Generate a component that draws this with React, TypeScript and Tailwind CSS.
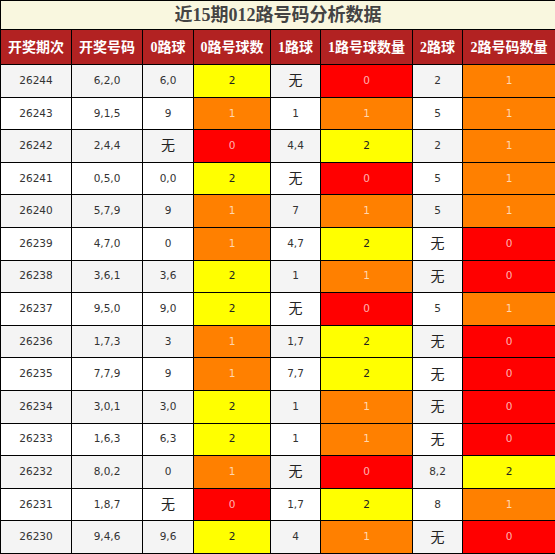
import React from "react";

type Row = [string, string, string, number, string, number, string, number];

const rows: Row[] = [
  ["26244", "6,2,0", "6,0", 2, "无", 0, "2", 1],
  ["26243", "9,1,5", "9", 1, "1", 1, "5", 1],
  ["26242", "2,4,4", "无", 0, "4,4", 2, "2", 1],
  ["26241", "0,5,0", "0,0", 2, "无", 0, "5", 1],
  ["26240", "5,7,9", "9", 1, "7", 1, "5", 1],
  ["26239", "4,7,0", "0", 1, "4,7", 2, "无", 0],
  ["26238", "3,6,1", "3,6", 2, "1", 1, "无", 0],
  ["26237", "9,5,0", "9,0", 2, "无", 0, "5", 1],
  ["26236", "1,7,3", "3", 1, "1,7", 2, "无", 0],
  ["26235", "7,7,9", "9", 1, "7,7", 2, "无", 0],
  ["26234", "3,0,1", "3,0", 2, "1", 1, "无", 0],
  ["26233", "1,6,3", "6,3", 2, "1", 1, "无", 0],
  ["26232", "8,0,2", "0", 1, "无", 0, "8,2", 2],
  ["26231", "1,8,7", "无", 0, "1,7", 2, "8", 1],
  ["26230", "9,4,6", "9,6", 2, "4", 1, "无", 0],
];

const heads = ["开奖期次", "开奖号码", "0路球", "0路号球数", "1路球", "1路号球数量", "2路球", "2路号码数量"];
const widths = ["w-[71px]", "w-[71px]", "w-[51px]", "w-[77px]", "w-[50px]", "w-[92px]", "w-[50px]", "w-[93px]"];

const countCell = (n: number) => {
  if (n === 0) return "bg-[#ff0000] text-white/70";
  if (n === 1) return "bg-[#ff8000] text-white/70";
  return "bg-[#ffff00] text-[#222]";
};

const Ball = ({ v }: { v: string }) =>
  v === "无" ? <span className="text-[14px] text-[#222]">无</span> : <>{v}</>;

const App = () => {
  return (
    <div className="w-[555px] bg-white">
      <table
        className="w-[555px] table-fixed border-collapse text-center"
        style={{ fontFamily: '"DejaVu Sans", "Noto Sans CJK SC", sans-serif' }}
      >
        <colgroup>
          {widths.map((w, i) => (
            <col key={i} className={w} />
          ))}
        </colgroup>
        <thead>
          <tr className="h-[29px]">
            <th
              colSpan={8}
              className="border border-black bg-[#f9f7df] text-[18px] font-bold text-[#444] p-0"
              style={{ fontFamily: '"Liberation Serif", "Noto Sans CJK SC", serif' }}
            >
              近15期012路号码分析数据
            </th>
          </tr>
          <tr className="h-[35px]">
            {heads.map((h) => (
              <th
                key={h}
                className="border border-black bg-[#b22222] text-[14px] font-bold text-white p-0"
                style={{ fontFamily: '"Liberation Serif", "Noto Sans CJK SC", serif' }}
              >
                {h}
              </th>
            ))}
          </tr>
        </thead>
        <tbody className="text-[10.5px] text-[#333]">
          {rows.map((r, i) => (
            <tr key={r[0]} className={`h-[32.6px] ${i % 2 === 0 ? "bg-[#f4f4f4]" : "bg-white"}`}>
              <td className="border border-black p-0">{r[0]}</td>
              <td className="border border-black p-0">{r[1]}</td>
              <td className="border border-black p-0">
                <Ball v={r[2]} />
              </td>
              <td className={`border border-black p-0 ${countCell(r[3])}`}>{r[3]}</td>
              <td className="border border-black p-0">
                <Ball v={r[4]} />
              </td>
              <td className={`border border-black p-0 ${countCell(r[5])}`}>{r[5]}</td>
              <td className="border border-black p-0">
                <Ball v={r[6]} />
              </td>
              <td className={`border border-black p-0 ${countCell(r[7])}`}>{r[7]}</td>
            </tr>
          ))}
        </tbody>
      </table>
    </div>
  );
};

export default App;
